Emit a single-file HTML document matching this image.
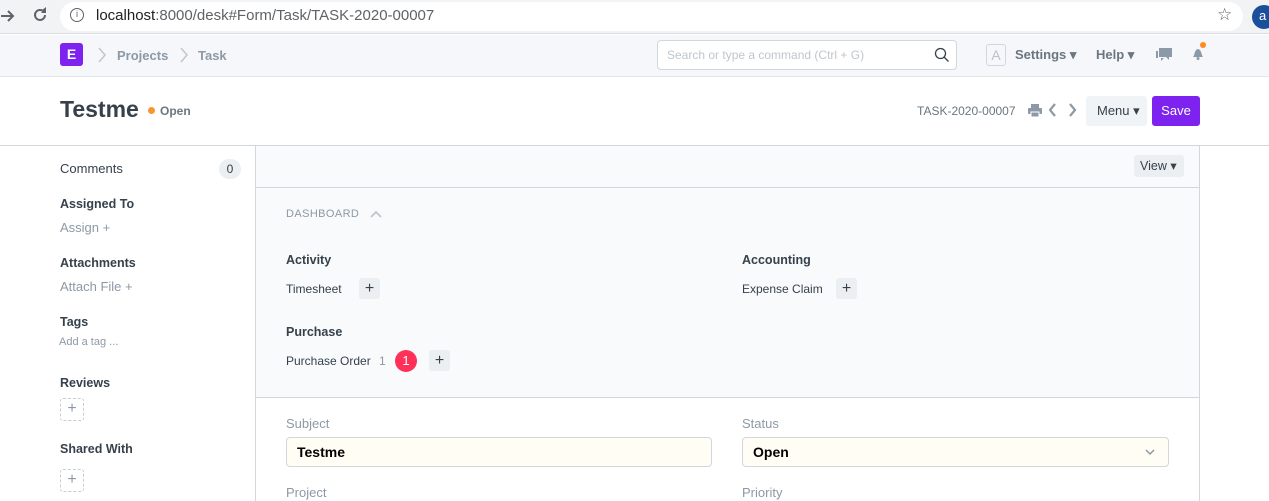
<!DOCTYPE html>
<html><head><style>
*{box-sizing:border-box;margin:0;padding:0}
body{width:1269px;height:501px;overflow:hidden;font-family:"Liberation Sans",sans-serif;background:#fff;position:relative;color:#36414c}
.a{position:absolute;white-space:nowrap}
.plus{position:absolute;width:21px;height:21px;background:#ebeff2;border-radius:3px;text-align:center;line-height:21px;font-size:16px;color:#36414c}
.dash{position:absolute;width:24px;height:23px;border:1px dashed #c8cdd2;border-radius:3px;text-align:center;line-height:20px;color:#8d99a6;font-size:16px}
.lbl{font-size:13px;color:#8d99a6}
.inp{position:absolute;height:30px;border:1px solid #d1d8dd;border-radius:4px;background:#fffdf4;font-weight:bold;font-size:14px;padding:6px 10px;color:#000}
</style></head><body>
<div class="a" style="left:0;top:0;width:1269px;height:34px;background:#f1f3f4;border-bottom:1px solid #dadce0"></div>
<svg class="a" style="left:0;top:8px" width="16" height="16"><path d="M1 8h12M8 3l5 5-5 5" stroke="#5f6368" stroke-width="2" fill="none"/></svg>
<svg class="a" style="left:32px;top:7px" width="16" height="16"><path d="M13 8a5 5 0 1 1-1.5-3.6" stroke="#5f6368" stroke-width="2" fill="none"/><path d="M9 4h5V0" fill="#5f6368"/><path d="M14 1v5h-5z" fill="#5f6368"/></svg>
<div class="a" style="left:60px;top:2px;width:1183px;height:29px;background:#fff;border-radius:15px"></div>
<div class="a" style="left:70px;top:8px;width:14px;height:14px;border:1.5px solid #5f6368;border-radius:50%;font-size:9px;text-align:center;line-height:11px;color:#5f6368">i</div>
<div class="a" style="left:96px;top:7px;font-size:15px;color:#202124">localhost<span style="color:#5f6368">:8000/desk#Form/Task/TASK-2020-00007</span></div>
<div class="a" style="left:1217px;top:5px;font-size:17px;color:#5f6368">☆</div>
<div class="a" style="left:1252px;top:5px;width:24px;height:24px;border-radius:50%;background:#1a4f9c;color:#fff;font-size:13px;line-height:22px;padding-left:7px">a</div>
<div class="a" style="left:0;top:35px;width:1269px;height:42px;background:#f5f7fa;border-bottom:1px solid #e3e6ea"></div>
<div class="a" style="left:60px;top:43px;width:23px;height:23px;background:#7e22ef;border-radius:3px;color:#fff;font-weight:bold;font-size:14px;text-align:center;line-height:23px">E</div>
<svg class="a" style="left:97px;top:47px" width="10" height="16"><path d="M2 1l6 7-6 7" stroke="#c0c6cc" stroke-width="1.5" fill="none"/></svg>
<div class="a" style="left:117px;top:48px;font-size:13px;font-weight:bold;color:#8d99a6">Projects</div>
<svg class="a" style="left:179px;top:47px" width="10" height="16"><path d="M2 1l6 7-6 7" stroke="#c0c6cc" stroke-width="1.5" fill="none"/></svg>
<div class="a" style="left:198px;top:48px;font-size:13px;font-weight:bold;color:#8d99a6">Task</div>
<div class="a" style="left:657px;top:40px;width:300px;height:30px;background:#fff;border:1px solid #d1d8dd;border-radius:4px;font-size:12px;color:#c0c6cc;padding:7px 9px">Search or type a command (Ctrl + G)</div>
<svg class="a" style="left:934px;top:47px" width="16" height="16"><circle cx="6.5" cy="6.5" r="5" stroke="#36414c" stroke-width="1.3" fill="none"/><path d="M10 10l4.5 4.5" stroke="#36414c" stroke-width="1.3"/></svg>
<div class="a" style="left:986px;top:44px;width:20px;height:22px;border:1px solid #d1d8dd;border-radius:3px;font-size:14px;color:#b8c2cc;text-align:center;line-height:20px">A</div>
<div class="a" style="left:1015px;top:47px;font-size:13px;font-weight:bold;color:#6c7680">Settings ▾</div>
<div class="a" style="left:1096px;top:47px;font-size:13px;font-weight:bold;color:#6c7680">Help ▾</div>
<svg class="a" style="left:1155px;top:47px" width="18" height="15"><path d="M4 1h13v9h-3v3l-3-3H4z" fill="#8d99a6"/><path d="M1 4h2v7h6l-3 3v-3H1z" fill="#8d99a6"/></svg>
<svg class="a" style="left:1190px;top:45px" width="16" height="16"><path d="M3 12c2-2 1-7 5-8 4 1 3 6 5 8z" fill="#8d99a6"/><circle cx="8" cy="13.5" r="1.5" fill="#8d99a6"/></svg>
<div class="a" style="left:1200px;top:42px;width:6px;height:6px;border-radius:50%;background:#ff8a1f"></div>
<div class="a" style="left:60px;top:96px;font-size:23px;font-weight:bold;color:#36414c">Testme</div>
<div class="a" style="left:148px;top:107px;width:7px;height:7px;border-radius:50%;background:#f8962e"></div>
<div class="a" style="left:160px;top:104px;font-size:12px;font-weight:bold;color:#6c7680">Open</div>
<div class="a" style="left:917px;top:104px;font-size:12px;color:#6c7680">TASK-2020-00007</div>
<svg class="a" style="left:1028px;top:104px" width="14" height="13"><rect x="3" y="0" width="8" height="4" fill="#8d99a6"/><rect x="0" y="4" width="14" height="6" rx="1" fill="#8d99a6"/><rect x="3" y="8" width="8" height="5" fill="#8d99a6" stroke="#fff" stroke-width="1"/></svg>
<svg class="a" style="left:1049px;top:103px" width="28" height="14"><path d="M6 1L1 7l5 6M21 1l5 6-5 6" stroke="#8d99a6" stroke-width="2.2" fill="none"/></svg>
<div class="a" style="left:1086px;top:96px;width:61px;height:30px;background:#f0f4f7;border-radius:3px;font-size:13px;color:#36414c;padding:7px 11px">Menu ▾</div>
<div class="a" style="left:1152px;top:96px;width:48px;height:30px;background:#7e22ef;border-radius:3px;font-size:13px;color:#fff;text-align:center;line-height:30px">Save</div>
<div class="a" style="left:0;top:145px;width:1269px;height:1px;background:#d1d8dd"></div>
<div class="a" style="left:60px;top:161px;font-size:13px">Comments</div>
<div class="a" style="left:219px;top:159px;width:22px;height:20px;border-radius:10px;background:#ebeff2;font-size:12px;text-align:center;line-height:20px">0</div>
<div class="a" style="left:60px;top:197px;font-size:12.5px;font-weight:bold">Assigned To</div>
<div class="a" style="left:60px;top:220px;font-size:13px;color:#8d99a6">Assign +</div>
<div class="a" style="left:60px;top:256px;font-size:12.5px;font-weight:bold">Attachments</div>
<div class="a" style="left:60px;top:279px;font-size:13px;color:#8d99a6">Attach File +</div>
<div class="a" style="left:60px;top:315px;font-size:12.5px;font-weight:bold">Tags</div>
<div class="a" style="left:59px;top:336px;font-size:11px;color:#8d99a6">Add a tag ...</div>
<div class="a" style="left:60px;top:376px;font-size:12.5px;font-weight:bold">Reviews</div>
<div class="dash" style="left:60px;top:398px">+</div>
<div class="a" style="left:60px;top:442px;font-size:12.5px;font-weight:bold">Shared With</div>
<div class="dash" style="left:60px;top:469px">+</div>
<div class="a" style="left:255px;top:146px;width:945px;height:252px;background:#f8fafc;border-left:1px solid #d1d8dd;border-right:1px solid #d1d8dd;border-bottom:1px solid #d1d8dd"></div>
<div class="a" style="left:255px;top:187px;width:945px;height:1px;background:#d1d8dd"></div>
<div class="a" style="left:255px;top:398px;width:945px;height:103px;border-left:1px solid #d1d8dd;border-right:1px solid #d1d8dd"></div>
<div class="a" style="left:1134px;top:155px;width:50px;height:22px;background:#ebeff2;border-radius:3px;font-size:12.5px;padding:3px 6px">View ▾</div>
<div class="a" style="left:286px;top:208px;font-size:11px;color:#8d99a6;letter-spacing:.4px">DASHBOARD</div>
<svg class="a" style="left:370px;top:210px" width="12" height="8"><path d="M1 7l5-5 5 5" stroke="#c0c6cc" stroke-width="1.8" fill="none"/></svg>
<div class="a" style="left:286px;top:253px;font-size:12.5px;font-weight:bold">Activity</div>
<div class="a" style="left:286px;top:282px;font-size:12px">Timesheet</div>
<div class="plus" style="left:359px;top:278px">+</div>
<div class="a" style="left:742px;top:253px;font-size:12.5px;font-weight:bold">Accounting</div>
<div class="a" style="left:742px;top:282px;font-size:12px">Expense Claim</div>
<div class="plus" style="left:836px;top:278px">+</div>
<div class="a" style="left:286px;top:325px;font-size:12.5px;font-weight:bold">Purchase</div>
<div class="a" style="left:286px;top:354px;font-size:12px">Purchase Order <span style="color:#8d99a6;margin-left:5px">1</span></div>
<div class="a" style="left:395px;top:350px;width:22px;height:22px;border-radius:50%;background:#ff3158;color:#fff;font-size:13px;text-align:center;line-height:22px">1</div>
<div class="plus" style="left:429px;top:350px">+</div>
<div class="a lbl" style="left:286px;top:416px">Subject</div>
<div class="inp" style="left:286px;top:437px;width:426px">Testme</div>
<div class="a lbl" style="left:742px;top:416px">Status</div>
<div class="inp" style="left:742px;top:437px;width:427px">Open</div>
<svg class="a" style="left:1145px;top:449px" width="10" height="7"><path d="M1 1l4 4 4-4" stroke="#8d99a6" stroke-width="1.5" fill="none"/></svg>
<div class="a lbl" style="left:286px;top:485px">Project</div>
<div class="a lbl" style="left:742px;top:485px">Priority</div>
</body></html>
